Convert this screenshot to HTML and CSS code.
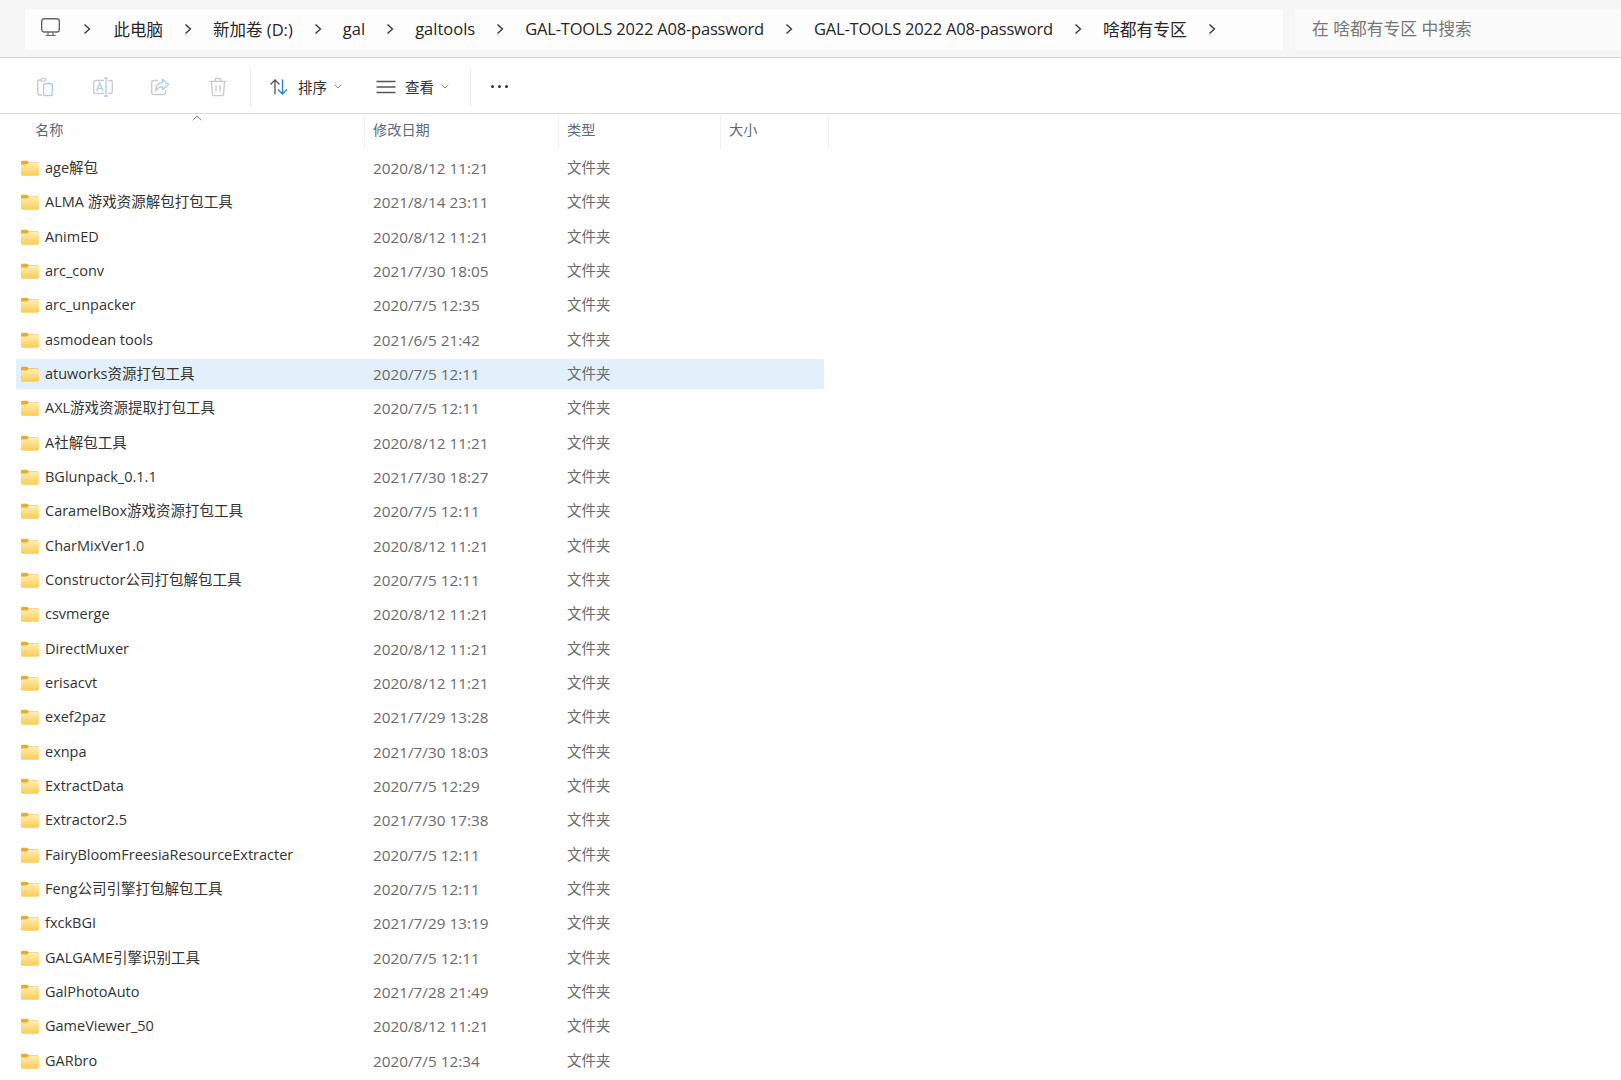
FILE: index.html
```html
<!DOCTYPE html>
<html lang="zh-CN">
<head>
<meta charset="utf-8">
<title>啥都有专区</title>
<link rel="stylesheet" href="styles.css">
</head>
<body>
<svg class="defs" width="0" height="0" aria-hidden="true">
  <defs>
    <linearGradient id="fg" x1="0" y1="0" x2="0" y2="1">
      <stop offset="0" stop-color="#ffeeb0"/>
      <stop offset="1" stop-color="#fbcb55"/>
    </linearGradient>
    <symbol id="folder" viewBox="0 0 18 16">
      <path d="M0 2.200C0 1.300.6.700 1.500.700h4c.5 0 .9.200 1.200.5L8 2.400h8.500c.9 0 1.500.6 1.500 1.500v3H0z" fill="#e9ab2c"/>
      <path d="M0 4.600h5.400c.5 0 .9-.2 1.200-.5L7.800 3h8.700c.9 0 1.500.6 1.500 1.500v9.800c0 .9-.6 1.500-1.500 1.500h-15C.6 15.800 0 15.200 0 14.300z" fill="url(#fg)"/>
    </symbol>
    <symbol id="chev" viewBox="0 0 8 12">
      <path d="M1.500 1.500 6.500 6l-5 4.500" fill="none" stroke="#333" stroke-width="1.300"/>
    </symbol>
    <symbol id="caret" viewBox="0 0 8 5">
      <path d="M.7.7 4 4l3.300-3.300" fill="none" stroke="#8a8a8a" stroke-width="1"/>
    </symbol>
  </defs>
</svg>

<header class="addressbar">
  <nav class="crumbs">
    <svg class="pc" viewBox="0 0 19 19"><rect x=".7" y=".7" width="17.600" height="13.300" rx="2.600" fill="none" stroke="#666" stroke-width="1.400"/><path d="M7 14.500v2.500M12 14.500v2.500M4.500 17.500h10" fill="none" stroke="#666" stroke-width="1.200"/></svg>
    <svg class="chev first"><use href="#chev"/></svg><span>此电脑</span>
    <svg class="chev"><use href="#chev"/></svg><span>新加卷 (D:)</span>
    <svg class="chev"><use href="#chev"/></svg><span>gal</span>
    <svg class="chev"><use href="#chev"/></svg><span>galtools</span>
    <svg class="chev"><use href="#chev"/></svg><span class="long">GAL-TOOLS 2022 A08-password</span>
    <svg class="chev"><use href="#chev"/></svg><span class="long">GAL-TOOLS 2022 A08-password</span>
    <svg class="chev"><use href="#chev"/></svg><span class="last">啥都有专区</span>
    <svg class="chev"><use href="#chev"/></svg>
  </nav>
  <div class="search">在 啥都有专区 中搜索</div>
</header>

<div class="toolbar">
  <div class="actions">
    <svg class="tool" viewBox="0 0 20 20"><path d="M6.500 3H4.500C3.400 3 2.700 3.700 2.700 4.800v11.400c0 1.100.7 1.800 1.800 1.800h2.500" fill="none" stroke="#c9c9c9" stroke-width="1.300"/><path d="M6 3.300C6 2 7 1.300 8 1.300h1c1 0 2 .7 2 2V4H6z" fill="none" stroke="#c9c9c9" stroke-width="1.200"/><rect x="8.500" y="6.500" width="8.800" height="12.200" rx="2" fill="#f4fafe" stroke="#a9cfe8" stroke-width="1.300"/></svg>
    <svg class="tool" viewBox="0 0 20 20"><path d="M11 3.500H2.500C1.400 3.500.7 4.200.7 5.300v9.400c0 1.100.7 1.800 1.800 1.800H11M15 3.500h2.500c1.100 0 1.800.7 1.800 1.800v9.400c0 1.100-.7 1.800-1.800 1.800H15" fill="none" stroke="#c9c9c9" stroke-width="1.300"/><path d="M3.500 14 6.800 6l3.300 8M4.700 11.300h4.200M13 1v18M11 .9h4M11 19.100h4" fill="none" stroke="#a9cfe8" stroke-width="1.300"/></svg>
    <svg class="tool" viewBox="0 0 20 20"><path d="M8 3.500H4C2.700 3.500 1.700 4.500 1.700 5.800v9.400c0 1.300 1 2.300 2.300 2.300h9.400c1.300 0 2.300-1 2.300-2.300V13" fill="none" stroke="#c9c9c9" stroke-width="1.300"/><path d="M12.500 2.200 18.500 7.500l-6 5.300V9.800C9 9.800 7 11 5.500 14c0-5 2.500-8.300 7-8.700z" fill="#f4fafe" stroke="#a9cfe8" stroke-width="1.300" stroke-linejoin="round"/></svg>
    <svg class="tool" viewBox="0 0 20 20"><path d="M1.500 4.300h17M7 4V2.800C7 2 7.600 1.500 8.300 1.500h3.400c.7 0 1.300.5 1.300 1.300V4M3.500 4.500l.9 12.800c.1.800.7 1.300 1.400 1.300h8.400c.7 0 1.300-.5 1.400-1.300l.9-12.800M8 8v6.500M12 8v6.500" fill="none" stroke="#c9c9c9" stroke-width="1.300"/></svg>
  </div>
  <div class="tsep"></div>
  <div class="btn sort">
    <svg class="btnicon" viewBox="0 0 20 18"><path d="M6 16.500V2M1.500 6.500 6 2l4.500 4.500" fill="none" stroke="#555" stroke-width="1.300"/><path d="M13.500 1.500V16M9 11.500 13.500 16l4.500-4.500" fill="none" stroke="#1f86d0" stroke-width="1.400"/></svg>
    <span>排序</span>
    <svg class="caret"><use href="#caret"/></svg>
  </div>
  <div class="btn view">
    <svg class="btnicon" viewBox="0 0 20 18"><path d="M.5 3.500h19M.5 9h19M.5 14.500h19" fill="none" stroke="#555" stroke-width="1.300"/></svg>
    <span>查看</span>
    <svg class="caret"><use href="#caret"/></svg>
  </div>
  <div class="tsep"></div>
  <div class="dots"><i></i><i></i><i></i></div>
</div>

<div class="columns">
  <div class="col c-name">名称<svg class="sortup" viewBox="0 0 10 6"><path d="M.7 5.300 5 1l4.300 4.300" fill="none" stroke="#8a8a8a" stroke-width="1"/></svg></div>
  <div class="col c-date">修改日期</div>
  <div class="col c-type">类型</div>
  <div class="col c-size">大小</div>
</div>

<main class="list">
  <div class="row"><div class="name"><svg class="folder"><use href="#folder"/></svg>age解包</div><div class="date">2020/8/12 11:21</div><div class="type">文件夹</div></div>
  <div class="row"><div class="name"><svg class="folder"><use href="#folder"/></svg>ALMA 游戏资源解包打包工具</div><div class="date">2021/8/14 23:11</div><div class="type">文件夹</div></div>
  <div class="row"><div class="name"><svg class="folder"><use href="#folder"/></svg>AnimED</div><div class="date">2020/8/12 11:21</div><div class="type">文件夹</div></div>
  <div class="row"><div class="name"><svg class="folder"><use href="#folder"/></svg>arc_conv</div><div class="date">2021/7/30 18:05</div><div class="type">文件夹</div></div>
  <div class="row"><div class="name"><svg class="folder"><use href="#folder"/></svg>arc_unpacker</div><div class="date">2020/7/5 12:35</div><div class="type">文件夹</div></div>
  <div class="row"><div class="name"><svg class="folder"><use href="#folder"/></svg>asmodean tools</div><div class="date">2021/6/5 21:42</div><div class="type">文件夹</div></div>
  <div class="row selected"><div class="name"><svg class="folder"><use href="#folder"/></svg>atuworks资源打包工具</div><div class="date">2020/7/5 12:11</div><div class="type">文件夹</div></div>
  <div class="row"><div class="name"><svg class="folder"><use href="#folder"/></svg>AXL游戏资源提取打包工具</div><div class="date">2020/7/5 12:11</div><div class="type">文件夹</div></div>
  <div class="row"><div class="name"><svg class="folder"><use href="#folder"/></svg>A社解包工具</div><div class="date">2020/8/12 11:21</div><div class="type">文件夹</div></div>
  <div class="row"><div class="name"><svg class="folder"><use href="#folder"/></svg>BGlunpack_0.1.1</div><div class="date">2021/7/30 18:27</div><div class="type">文件夹</div></div>
  <div class="row"><div class="name"><svg class="folder"><use href="#folder"/></svg>CaramelBox游戏资源打包工具</div><div class="date">2020/7/5 12:11</div><div class="type">文件夹</div></div>
  <div class="row"><div class="name"><svg class="folder"><use href="#folder"/></svg>CharMixVer1.0</div><div class="date">2020/8/12 11:21</div><div class="type">文件夹</div></div>
  <div class="row"><div class="name"><svg class="folder"><use href="#folder"/></svg>Constructor公司打包解包工具</div><div class="date">2020/7/5 12:11</div><div class="type">文件夹</div></div>
  <div class="row"><div class="name"><svg class="folder"><use href="#folder"/></svg>csvmerge</div><div class="date">2020/8/12 11:21</div><div class="type">文件夹</div></div>
  <div class="row"><div class="name"><svg class="folder"><use href="#folder"/></svg>DirectMuxer</div><div class="date">2020/8/12 11:21</div><div class="type">文件夹</div></div>
  <div class="row"><div class="name"><svg class="folder"><use href="#folder"/></svg>erisacvt</div><div class="date">2020/8/12 11:21</div><div class="type">文件夹</div></div>
  <div class="row"><div class="name"><svg class="folder"><use href="#folder"/></svg>exef2paz</div><div class="date">2021/7/29 13:28</div><div class="type">文件夹</div></div>
  <div class="row"><div class="name"><svg class="folder"><use href="#folder"/></svg>exnpa</div><div class="date">2021/7/30 18:03</div><div class="type">文件夹</div></div>
  <div class="row"><div class="name"><svg class="folder"><use href="#folder"/></svg>ExtractData</div><div class="date">2020/7/5 12:29</div><div class="type">文件夹</div></div>
  <div class="row"><div class="name"><svg class="folder"><use href="#folder"/></svg>Extractor2.5</div><div class="date">2021/7/30 17:38</div><div class="type">文件夹</div></div>
  <div class="row"><div class="name"><svg class="folder"><use href="#folder"/></svg>FairyBloomFreesiaResourceExtracter</div><div class="date">2020/7/5 12:11</div><div class="type">文件夹</div></div>
  <div class="row"><div class="name"><svg class="folder"><use href="#folder"/></svg>Feng公司引擎打包解包工具</div><div class="date">2020/7/5 12:11</div><div class="type">文件夹</div></div>
  <div class="row"><div class="name"><svg class="folder"><use href="#folder"/></svg>fxckBGI</div><div class="date">2021/7/29 13:19</div><div class="type">文件夹</div></div>
  <div class="row"><div class="name"><svg class="folder"><use href="#folder"/></svg>GALGAME引擎识别工具</div><div class="date">2020/7/5 12:11</div><div class="type">文件夹</div></div>
  <div class="row"><div class="name"><svg class="folder"><use href="#folder"/></svg>GalPhotoAuto</div><div class="date">2021/7/28 21:49</div><div class="type">文件夹</div></div>
  <div class="row"><div class="name"><svg class="folder"><use href="#folder"/></svg>GameViewer_50</div><div class="date">2020/8/12 11:21</div><div class="type">文件夹</div></div>
  <div class="row"><div class="name"><svg class="folder"><use href="#folder"/></svg>GARbro</div><div class="date">2020/7/5 12:34</div><div class="type">文件夹</div></div>
</main>
</body>
</html>
```

FILE: styles.css
```css
* { box-sizing: border-box; }
html, body { height: 100%; }
body {
  margin: 0;
  background: #fff;
  overflow: hidden;
  font-family: "Open Sans", "Noto Sans CJK SC", sans-serif;
  color: #222;
}
.defs { display: block; height: 0; }

.addressbar {
  height: 58px;
  display: flex;
  gap: 12px;
  padding: 9px 0 7px 25px;
  background: #f6f6f6;
  border-bottom: 1px solid #d6d6d6;
}
.crumbs {
  width: 1258px;
  display: flex;
  align-items: center;
  gap: 21px;
  padding: 0 0 2px 16px;
  background: #fdfdfd;
  font-size: 16.500px;
  color: #262626;
  white-space: nowrap;
}
.pc { width: 19px; height: 19px; margin-top: -3px; margin-right: 2px; flex: none; }
.chev { width: 8px; height: 12px; flex: none; }
.first { margin-right: 1.500px; }
.long { letter-spacing: -.2px; }
.last { font-size: 16.800px; }
.search {
  flex: 1;
  display: flex;
  align-items: center;
  padding: 0 0 3px 17px;
  background: #fbfbfb;
  font-size: 16.800px;
  color: #777;
}

.toolbar {
  height: 56px;
  display: flex;
  align-items: center;
  padding-top: 2px;
  border-bottom: 1px solid #dcdcdc;
}
.actions {
  display: flex;
  gap: 37.500px;
  padding-left: 35px;
  width: 250px;
}
.tool { width: 20px; height: 20px; flex: none; }
.tsep { width: 1px; height: 38px; background: #ececec; }
.btn {
  display: flex;
  align-items: center;
  font-size: 14.500px;
  color: #333;
}
.btnicon { width: 20px; height: 18px; flex: none; }
.btn span { margin-left: 9px; }
.caret { width: 8px; height: 5px; margin-left: 7px; flex: none; }
.sort { padding-left: 18px; width: 125px; }
.view { width: 93.500px; }
.dots {
  display: flex;
  gap: 3.500px;
  margin-left: 20px;
}
.dots i {
  width: 3.500px;
  height: 3.500px;
  border-radius: 50%;
  background: #333;
}

.columns {
  height: 39px;
  display: grid;
  grid-template-columns: 365px 194px 162px 108px;
  align-items: start;
  font-size: 14.200px;
  color: #5c6a80;
}
.col {
  position: relative;
  height: 34px;
  padding-left: 8px;
  line-height: 30px;
  margin-top: 1px;
  border-right: 1px solid #efefef;
}
.c-name { padding-left: 35px; }
.sortup {
  position: absolute;
  left: 192px;
  top: 0;
  width: 10px;
  height: 6px;
}

.list {
  display: grid;
  grid-auto-rows: 30px;
  row-gap: 4.330px;
  width: 808px;
  margin-left: 16px;
}
.row {
  display: grid;
  grid-template-columns: 349px 193px 1fr;
  align-items: center;
  font-size: 14.500px;
  line-height: 20px;
  white-space: nowrap;
}
.selected { background: #e1f0fb; }
.name {
  display: flex;
  align-items: center;
  padding-left: 5px;
  color: #333;
}
.folder { width: 18px; height: 16px; margin-right: 6px; flex: none; }
.date { padding-left: 8px; color: #6a6a6a; font-size: 15.300px; }
.type { padding-left: 9px; color: #6a6a6a; }
```
